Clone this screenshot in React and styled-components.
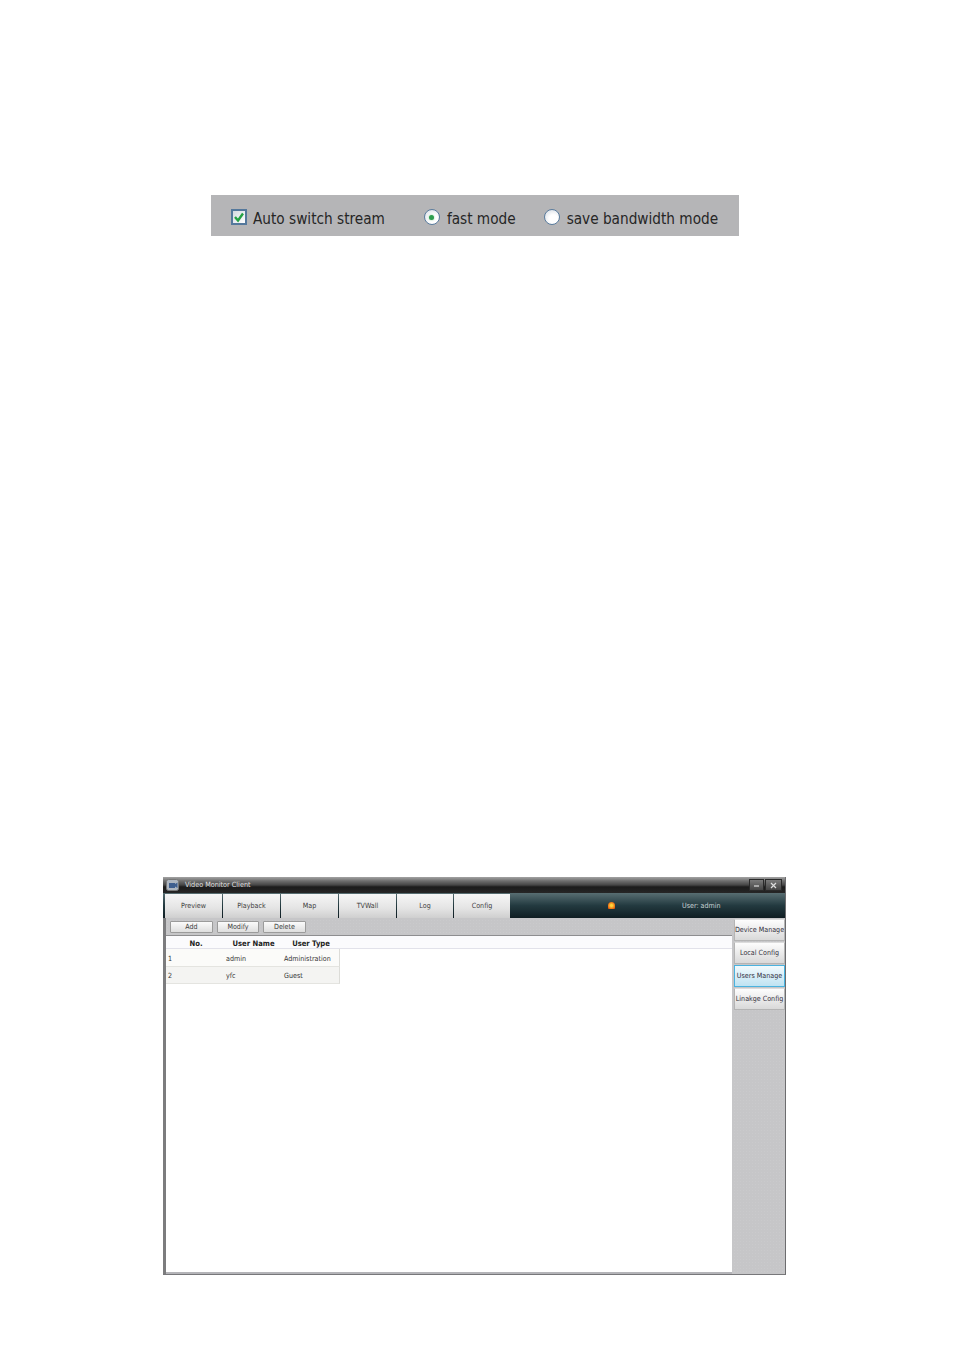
import React from 'react';
import styled, { createGlobalStyle } from 'styled-components';

const GlobalStyle = createGlobalStyle`
    html, body {
        margin: 0;
        padding: 0;
        background: #fff;
    }
`;

const Page = styled.div`
    width: 954px;
    height: 1348px;
    padding-top: 195px;
    box-sizing: border-box;
    display: flex;
    flex-direction: column;
`;

const OptionBar = styled.div`
    width: 528px;
    height: 41px;
    margin-left: 211px;
    box-sizing: border-box;
    padding-left: 20px;
    background: #b5b5b7;
    display: flex;
    align-items: center;
    font-family: 'DejaVu Sans Condensed', 'DejaVu Sans', sans-serif;
    font-stretch: condensed;
    font-size: 15.2px;
    color: #262626;
`;

const Option = styled.label`
    display: flex;
    align-items: center;
    gap: ${({ $gap }) => $gap}px;
    margin-right: ${({ $right }) => $right}px;
    white-space: nowrap;
    line-height: 17px;
    padding-top: 8px;
`;

const Check = styled.span`
    width: 16px;
    height: 16px;
    box-sizing: border-box;
    border: 2px solid #54789c;
    background: linear-gradient(135deg, #d4d9e0, #fff);
    display: flex;
    align-items: center;
    justify-content: center;
    margin-top: -5px;
`;

const Radio = styled.span`
    width: 16px;
    height: 16px;
    box-sizing: border-box;
    border-radius: 50%;
    border: 1.5px solid #5a7c9e;
    background: radial-gradient(circle at 60% 65%, #fff 35%, #cfd6df 100%);
    display: flex;
    align-items: center;
    justify-content: center;
    margin-top: -5px;
    &::after {
        content: '';
        display: ${({ $on }) => ($on ? 'block' : 'none')};
        width: 5px;
        height: 5px;
        border-radius: 50%;
        background: #2f9e4f;
        box-shadow: 0 0 2px #7cc992;
    }
`;

const Window = styled.div`
    width: 623px;
    height: 398px;
    margin-left: 163px;
    margin-top: 641px;
    box-sizing: border-box;
    background-color: #c6c6c8;
    background-image: radial-gradient(rgba(255, 255, 255, 0.08) 1px, transparent 1px);
    background-size: 3px 3px;
    border-right: 1px solid #6d6d6f;
    border-bottom: 1px solid #77777a;
    display: flex;
    flex-direction: column;
    font-family: 'DejaVu Sans Condensed', 'DejaVu Sans', sans-serif;
    font-stretch: condensed;
    font-size: 7.1px;
    color: #333;
`;

const TitleBar = styled.div`
    height: 16px;
    flex: none;
    background: linear-gradient(#a3a3a3 0%, #6e6e6e 25%, #464646 50%, #1c1c1c 62%, #262626 100%);
    display: flex;
    align-items: center;
    padding-left: 3px;
    color: #e2e2e2;
    font-size: 7.2px;
`;

const TitleText = styled.span`
    margin-left: 6px;
    margin-top: -2px;
`;

const WindowButtons = styled.div`
    margin-left: auto;
    margin-right: 3px;
    display: flex;
    gap: 1px;
`;

const WindowButton = styled.span`
    width: ${({ $w }) => $w}px;
    height: 12px;
    box-sizing: border-box;
    border: 1px solid #2a2a2a;
    background: linear-gradient(#7a7a7a, #444);
    display: flex;
    align-items: center;
    justify-content: center;
`;

const NavBar = styled.div`
    height: 25px;
    flex: none;
    padding-left: 2px;
    background: linear-gradient(#586e72 0%, #233a40 50%, #0f1d22 100%);
    display: flex;
    align-items: center;
    color: #dfe6e8;
`;

const Tab = styled.div`
    width: ${({ $w }) => $w}px;
    height: 24px;
    margin-right: 1px;
    background: linear-gradient(#f6f6f6 0%, #e4e4e4 60%, #cfcfcf 100%);
    display: flex;
    align-items: center;
    justify-content: center;
    color: #3c3c3c;
    box-sizing: border-box;
`;

const Alarm = styled.span`
    margin-left: 97px;
    width: 7px;
    height: 7px;
    border-radius: 50% 50% 1px 1px;
    background: radial-gradient(circle, #ffd23a 20%, #e8590c 80%);
`;

const UserLabel = styled.span`
    margin-left: 67px;
    color: #c9d3d6;
`;

const Body = styled.div`
    flex: 1;
    min-height: 0;
    display: flex;
`;

const Main = styled.div`
    width: 569px;
    flex: none;
    display: flex;
    flex-direction: column;
    border-left: 3px solid #7c7c7e;
    box-sizing: border-box;
`;

const Toolbar = styled.div`
    height: 18px;
    flex: none;
    padding-left: 4px;
    display: flex;
    align-items: center;
    gap: 4px;
    border-bottom: 1px solid #8e8e90;
    box-sizing: border-box;
`;

const ToolButton = styled.div`
    width: ${({ $w }) => $w}px;
    height: 12px;
    border: 1px solid #9b9b9b;
    border-radius: 1px;
    background: linear-gradient(#fbfbfb, #dedede);
    display: flex;
    align-items: center;
    justify-content: center;
    color: #3c3c3c;
    box-sizing: border-box;
`;

const TableArea = styled.div`
    flex: 1;
    min-height: 0;
    background: #fff;
    border-bottom: 2px solid #b4b4b8;
`;

const HeaderRow = styled.div`
    height: 13px;
    padding-top: 2px;
    box-sizing: border-box;
    display: flex;
    align-items: center;
    background: #fbfbfd;
    border-bottom: 1px solid #e2e2ea;
    font-weight: bold;
    font-size: 7.6px;
    color: #222;
`;

const Row = styled.div`
    width: 174px;
    height: ${({ $h }) => $h}px;
    padding-top: 1px;
    display: flex;
    align-items: center;
    background: ${({ $alt }) => ($alt ? '#f4f4f2' : '#fbfbf9')};
    border-bottom: 1px solid #e4e4e0;
    border-right: 1px solid #dcdcd8;
    box-sizing: border-box;
`;

const Cell = styled.div`
    width: ${({ $w }) => $w}px;
    flex: none;
    box-sizing: border-box;
    padding-left: 2px;
    text-align: ${({ $center }) => ($center ? 'center' : 'left')};
    white-space: nowrap;
`;

const Side = styled.div`
    flex: 1;
    min-width: 0;
    display: flex;
    flex-direction: column;
    padding: 1px 0 0 2px;
    gap: 1px;
`;

const SideButton = styled.div`
    height: 22px;
    flex: none;
    box-sizing: border-box;
    padding-bottom: 2px;
    border: 1px solid ${({ $active }) => ($active ? '#4ab3df' : '#b4b4b4')};
    border-top-color: ${({ $active }) => ($active ? '#4ab3df' : '#dcdcdc')};
    background: ${({ $active }) =>
        $active ? 'linear-gradient(#f2fafd, #bfe3f2)' : 'linear-gradient(#fdfdfd, #d9d9d9)'};
    display: flex;
    align-items: center;
    justify-content: center;
    color: #33303c;
    font-size: 7.1px;
    white-space: nowrap;
    overflow: hidden;
`;

const tabs = [
    { label: 'Preview', w: 57 },
    { label: 'Playback', w: 57 },
    { label: 'Map', w: 57 },
    { label: 'TVWall', w: 57 },
    { label: 'Log', w: 56 },
    { label: 'Config', w: 56 },
];

const columns = [
    { label: 'No.', w: 58, center: true },
    { label: 'User Name', w: 57, center: true },
    { label: 'User Type', w: 58, center: true },
];

const users = [
    { no: '1', name: 'admin', type: 'Administration', h: 18 },
    { no: '2', name: 'yfc', type: 'Guest', h: 17, alt: true },
];

const sideItems = ['Device Manage', 'Local Config', 'Users Manage', 'Linakge Config'];

export default function App() {
    return (
        <Page>
            <GlobalStyle />
            <OptionBar>
                <Option $gap={6} $right={39}>
                    <Check>
                        <svg width="12" height="12" viewBox="0 0 12 12">
                            <path d="M2 6 L5 9.5 L10 2.5" fill="none" stroke="#25a244" strokeWidth="2.4" />
                        </svg>
                    </Check>
                    Auto switch stream
                </Option>
                <Option $gap={7} $right={28}>
                    <Radio $on />
                    fast mode
                </Option>
                <Option $gap={7} $right={0}>
                    <Radio />
                    save bandwidth mode
                </Option>
            </OptionBar>
            <Window>
                <TitleBar>
                    <svg width="13" height="12" viewBox="0 0 13 12">
                        <rect x="0.5" y="0.5" width="12" height="11" rx="2" fill="#aeb6c0" stroke="#777" />
                        <rect x="3" y="4" width="6" height="5" fill="#3f5f8f" />
                        <path d="M9 5 L11.5 3.5 V9 L9 7.5 Z" fill="#3f5f8f" />
                    </svg>
                    <TitleText>Video Monitor Client</TitleText>
                    <WindowButtons>
                        <WindowButton $w={15}>
                            <svg width="7" height="7" viewBox="0 0 7 7">
                                <path d="M1 4 H6" stroke="#ddd" strokeWidth="1.2" />
                            </svg>
                        </WindowButton>
                        <WindowButton $w={17}>
                            <svg width="7" height="7" viewBox="0 0 7 7">
                                <path d="M1 1 L6 6 M6 1 L1 6" stroke="#ddd" strokeWidth="1.2" />
                            </svg>
                        </WindowButton>
                    </WindowButtons>
                </TitleBar>
                <NavBar>
                    {tabs.map((t) => (
                        <Tab key={t.label} $w={t.w}>
                            {t.label}
                        </Tab>
                    ))}
                    <Alarm />
                    <UserLabel>User: admin</UserLabel>
                </NavBar>
                <Body>
                    <Main>
                        <Toolbar>
                            <ToolButton $w={43}>Add</ToolButton>
                            <ToolButton $w={42}>Modify</ToolButton>
                            <ToolButton $w={43}>Delete</ToolButton>
                        </Toolbar>
                        <TableArea>
                            <HeaderRow>
                                {columns.map((c) => (
                                    <Cell key={c.label} $w={c.w} $center={c.center}>
                                        {c.label}
                                    </Cell>
                                ))}
                            </HeaderRow>
                            {users.map((u) => (
                                <Row key={u.no} $h={u.h} $alt={u.alt}>
                                    <Cell $w={58}>{u.no}</Cell>
                                    <Cell $w={58}>{u.name}</Cell>
                                    <Cell $w={58}>{u.type}</Cell>
                                </Row>
                            ))}
                        </TableArea>
                    </Main>
                    <Side>
                        {sideItems.map((s) => (
                            <SideButton key={s} $active={s === 'Users Manage'}>
                                {s}
                            </SideButton>
                        ))}
                    </Side>
                </Body>
            </Window>
        </Page>
    );
}
